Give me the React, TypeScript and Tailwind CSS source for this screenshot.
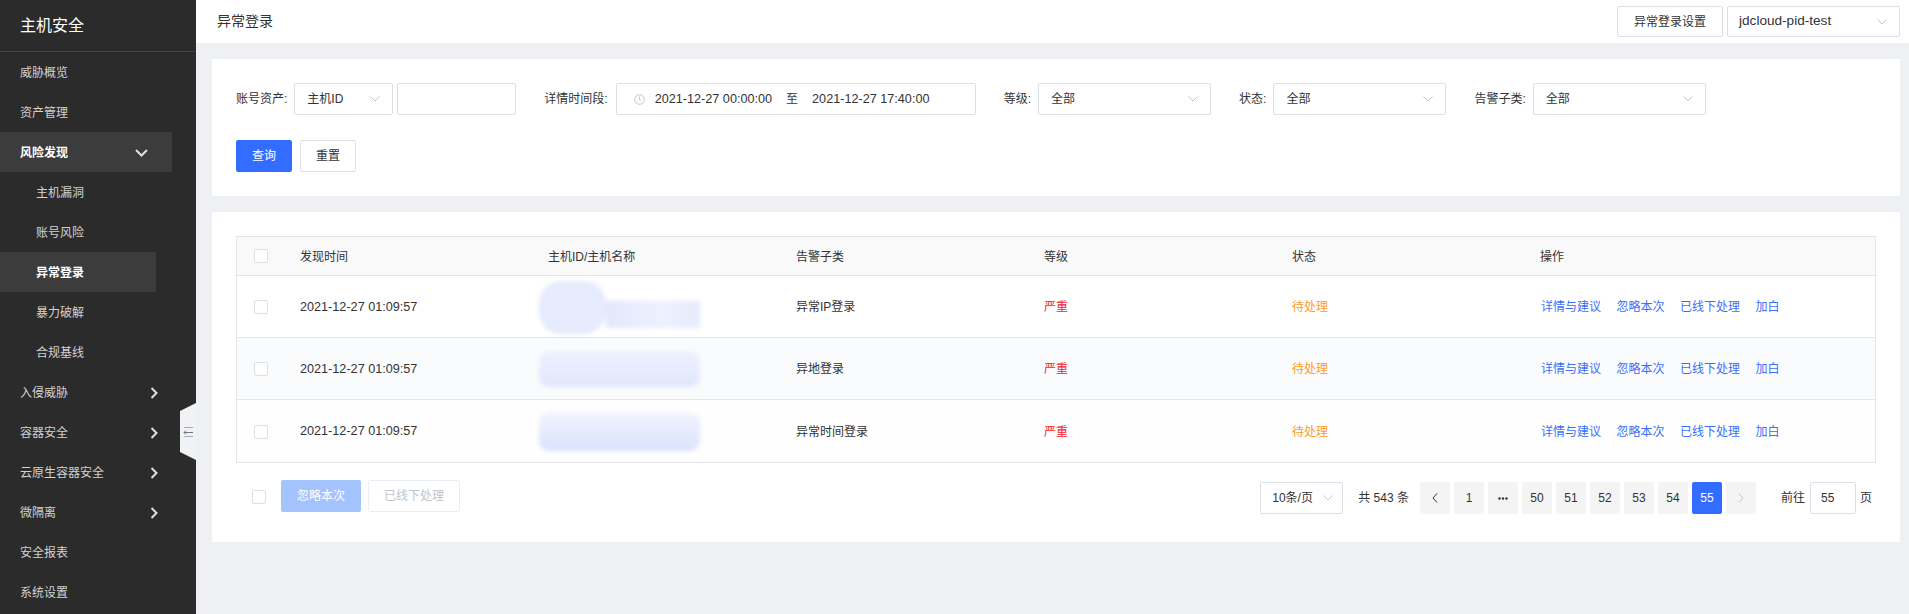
import React from "react";

const ChevronDown = ({ className = "" }: { className?: string }) => (
  <svg width="10" height="6" viewBox="0 0 10 6" className={className} fill="none">
    <path d="M0.5 0.5 L5 5 L9.5 0.5" stroke="currentColor" strokeWidth="1" />
  </svg>
);

const SideChevronRight = () => (
  <svg width="8" height="12" viewBox="0 0 8 12" fill="none">
    <path d="M1.5 1 L6.5 6 L1.5 11" stroke="#e0e0e0" strokeWidth="2" />
  </svg>
);

const SideChevronDown = () => (
  <svg width="13" height="8" viewBox="0 0 13 8" fill="none">
    <path d="M1 1 L6.5 6.5 L12 1" stroke="#e0e0e0" strokeWidth="2" />
  </svg>
);

const Checkbox = () => (
  <div className="w-[14px] h-[14px] border border-[#dcdfe6] rounded-[2px] bg-white shrink-0" />
);

const Select = ({ value, width }: { value: string; width: string }) => (
  <div
    className={`${width} h-[32px] border border-[#dcdfe6] rounded-[2px] bg-white flex items-center justify-between pl-[12px] pr-[12px] text-[12px] text-[#333]`}
  >
    <span>{value}</span>
    <ChevronDown className="text-[#c0c4cc]" />
  </div>
);

type MenuItem = { label: string; sub?: boolean; active?: boolean; open?: boolean; arrow?: boolean };

const menu: MenuItem[] = [
  { label: "威胁概览" },
  { label: "资产管理" },
  { label: "风险发现", open: true },
  { label: "主机漏洞", sub: true },
  { label: "账号风险", sub: true },
  { label: "异常登录", sub: true, active: true },
  { label: "暴力破解", sub: true },
  { label: "合规基线", sub: true },
  { label: "入侵威胁", arrow: true },
  { label: "容器安全", arrow: true },
  { label: "云原生容器安全", arrow: true },
  { label: "微隔离", arrow: true },
  { label: "安全报表" },
  { label: "系统设置" },
];

const rows = [
  { time: "2021-12-27 01:09:57", type: "异常IP登录", blob: 1 },
  { time: "2021-12-27 01:09:57", type: "异地登录", blob: 2 },
  { time: "2021-12-27 01:09:57", type: "异常时间登录", blob: 3 },
];

const Blob = ({ kind }: { kind: number }) => {
  if (kind === 1) {
    return (
      <div className="flex items-end blur-[2px]">
        <div className="w-[67px] h-[53px] rounded-[22px] bg-[#e6ebfd]" />
        <div className="w-[94px] h-[27px] mb-[6px] bg-[linear-gradient(90deg,#e2e7fc,#eef1fe_60%,#e6eafc)]" />
      </div>
    );
  }
  if (kind === 2) {
    return (
      <div className="w-[161px] h-[36px] rounded-[10px] blur-[2px] bg-[linear-gradient(180deg,#eef1fe,#e0e6fc)]" />
    );
  }
  return (
    <div className="w-[161px] h-[38px] rounded-[10px] blur-[2px] bg-[linear-gradient(180deg,#f1f3fe,#dbe2fb)]" />
  );
};

export default function App() {
  return (
    <div className="relative flex w-full h-[614px] overflow-hidden font-['Liberation_Sans','Noto_Sans_CJK_SC',sans-serif] text-[12px] text-[#333]">
      {/* Sidebar */}
      <aside className="w-[196px] shrink-0 bg-[#2b2b2b] flex flex-col">
        <div className="h-[52px] border-b border-[#444] flex items-center pl-[20px] text-[16px] text-white">
          主机安全
        </div>
        {menu.map((m) => (
          <div
            key={m.label}
            className={`h-[40px] flex items-center justify-between pt-[1px] pr-[24px] ${
              m.sub ? "pl-[36px]" : "pl-[20px]"
            } ${m.open ? "bg-[#3c3c3c] w-[172px] pr-[16px]" : ""} ${
              m.active ? "bg-[#3c3c3c] w-[156px]" : ""
            } ${m.open || m.active ? "text-white font-bold" : "text-[#d2d2d2]"}`}
          >
            <span>{m.label}</span>
            {m.open && <SideChevronDown />}
            {m.arrow && (
              <span className="mr-[14px]">
                <SideChevronRight />
              </span>
            )}
          </div>
        ))}
      </aside>

      {/* collapse tab */}
      <div className="absolute left-[180px] top-[403px] w-[16px] h-[57px]">
        <svg width="16" height="57" viewBox="0 0 16 57">
          <polygon points="0,8 16,0 16,57 0,49" fill="#f1f2f6" />
          <line x1="4" y1="24.5" x2="13" y2="24.5" stroke="#a8acb5" strokeWidth="1" />
          <line x1="4" y1="29.5" x2="13" y2="29.5" stroke="#6f7582" strokeWidth="1" />
          <path d="M6 27.5 L4 29.5 L6 31.5" stroke="#6f7582" strokeWidth="1" fill="none" />
          <line x1="4" y1="33.5" x2="13" y2="33.5" stroke="#a8acb5" strokeWidth="1" />
        </svg>
      </div>

      {/* Main */}
      <main className="flex-1 bg-[#eff0f4] flex flex-col min-w-0">
        <header className="h-[43px] bg-white flex items-center justify-between pl-[21px] pr-[9px] shrink-0">
          <span className="text-[14px] text-[#333]">异常登录</span>
          <div className="flex items-center gap-[4px]">
            <div className="h-[31px] px-[16px] border border-[#dcdfe6] rounded-[2px] flex items-center text-[12px] text-[#333]">
              异常登录设置
            </div>
            <div className="w-[173px] h-[31px] border border-[#dcdfe6] rounded-[2px] flex items-center justify-between pl-[11px] pr-[12px] text-[13.6px] text-[#333]">
              <span>jdcloud-pid-test</span>
              <ChevronDown className="text-[#c0c4cc]" />
            </div>
          </div>
        </header>

        <div className="pl-[16px] pr-[9px] pt-[16px] flex flex-col gap-[16px]">
          {/* Filter panel */}
          <section className="bg-white p-[24px] flex flex-col gap-[25px]">
            <div className="flex items-center">
              <div className="flex items-center">
                <span className="mr-[7px]">账号资产:</span>
                <Select value="主机ID" width="w-[99px]" />
                <div className="ml-[4px] w-[119px] h-[32px] border border-[#dcdfe6] rounded-[2px]" />
              </div>
              <div className="flex items-center ml-[28px]">
                <span className="mr-[8px]">详情时间段:</span>
                <div className="w-[360px] h-[32px] border border-[#dcdfe6] rounded-[2px] flex items-center pl-[17px] text-[#333]">
                  <svg width="11" height="11" viewBox="0 0 11 11" fill="none" className="mr-[10px]">
                    <circle cx="5.5" cy="5.5" r="4.8" stroke="#c0c4cc" strokeWidth="1" />
                    <path d="M5.5 2.6 V5.6 L7.4 6.8" stroke="#c0c4cc" strokeWidth="1" />
                  </svg>
                  <span className="text-[12.65px]">2021-12-27 00:00:00</span>
                  <span className="mx-[14px]">至</span>
                  <span className="text-[12.65px]">2021-12-27 17:40:00</span>
                </div>
              </div>
              <div className="flex items-center ml-[28px]">
                <span className="mr-[7px]">等级:</span>
                <Select value="全部" width="w-[173px]" />
              </div>
              <div className="flex items-center ml-[28px]">
                <span className="mr-[7px]">状态:</span>
                <Select value="全部" width="w-[173px]" />
              </div>
              <div className="flex items-center ml-[28px]">
                <span className="mr-[7px]">告警子类:</span>
                <Select value="全部" width="w-[173px]" />
              </div>
            </div>
            <div className="flex items-center gap-[8px]">
              <div className="w-[56px] h-[32px] bg-[#336dff] rounded-[2px] text-white flex items-center justify-center">
                查询
              </div>
              <div className="w-[56px] h-[32px] border border-[#dcdfe6] rounded-[2px] flex items-center justify-center text-[#333]">
                重置
              </div>
            </div>
          </section>

          {/* Table panel */}
          <section className="bg-white px-[24px] pt-[24px] pb-[28px]">
            <div className="border border-[#e6e6e6] divide-y divide-[#e6e6e6]">
              <div className="h-[39px] pt-[2px] bg-[#f9f9f9] grid grid-cols-[51px_248px_248px_248px_248px_248px_1fr] items-center text-[#333]">
                <div className="pl-[17px] -mt-[2px]">
                  <Checkbox />
                </div>
                <div className="pl-[12px]">发现时间</div>
                <div className="pl-[12px]">主机ID/主机名称</div>
                <div className="pl-[12px]">告警子类</div>
                <div className="pl-[12px]">等级</div>
                <div className="pl-[12px]">状态</div>
                <div className="pl-[12px]">操作</div>
              </div>
              {rows.map((r, i) => (
                <div
                  key={i}
                  className={`h-[62px] pt-[1px] grid grid-cols-[51px_248px_248px_248px_248px_248px_1fr] items-center ${
                    i === 1 ? "bg-[#fafbfd]" : i === 2 ? "bg-[#fefefe]" : "bg-white"
                  }`}
                >
                  <div className="pl-[17px]">
                    <Checkbox />
                  </div>
                  <div className="pl-[12px] text-[12.65px]">{r.time}</div>
                  <div className="pl-[3px]">
                    <Blob kind={r.blob} />
                  </div>
                  <div className="pl-[12px]">{r.type}</div>
                  <div className="pl-[12px] text-[#f5222d]">严重</div>
                  <div className="pl-[12px] text-[#ff9a1f]">待处理</div>
                  <div className="pl-[13px] flex items-center gap-[15.5px] text-[#3a6ff7]">
                    <span>详情与建议</span>
                    <span>忽略本次</span>
                    <span>已线下处理</span>
                    <span>加白</span>
                  </div>
                </div>
              ))}
            </div>

            <div className="mt-[17px] flex items-start">
              <div className="flex items-center">
                <div className="ml-[16px] mt-[1px]">
                  <Checkbox />
                </div>
                <div className="ml-[15px] w-[80px] h-[32px] bg-[#a3c3ff] rounded-[2px] text-white flex items-center justify-center">
                  忽略本次
                </div>
                <div className="ml-[7px] w-[92px] h-[32px] border border-[#ebeef5] rounded-[2px] text-[#c0c4cc] flex items-center justify-center">
                  已线下处理
                </div>
              </div>
              <div className="ml-auto mt-[2px] mr-[4px] flex items-center">
                <div className="w-[83px] h-[32px] border border-[#dcdfe6] rounded-[2px] flex items-center justify-between pl-[11px] pr-[9px]">
                  <span>10条/页</span>
                  <ChevronDown className="text-[#c0c4cc]" />
                </div>
                <span className="ml-[15px]">共 543 条</span>
                <div className="ml-[11px] flex items-center gap-[4px]">
                  <div className="w-[30px] h-[32px] bg-[#f4f4f5] rounded-[2px] flex items-center justify-center">
                    <svg width="6" height="10" viewBox="0 0 6 10" fill="none">
                      <path d="M5 0.5 L1 5 L5 9.5" stroke="#333" strokeWidth="1" />
                    </svg>
                  </div>
                  <div className="w-[30px] h-[32px] bg-[#f4f4f5] rounded-[2px] flex items-center justify-center">1</div>
                  <div className="w-[30px] h-[32px] bg-[#f4f4f5] rounded-[2px] flex items-center justify-center">
                    <svg width="10" height="3" viewBox="0 0 10 3">
                      <circle cx="1.5" cy="1.5" r="1.2" fill="#333" />
                      <circle cx="5" cy="1.5" r="1.2" fill="#333" />
                      <circle cx="8.5" cy="1.5" r="1.2" fill="#333" />
                    </svg>
                  </div>
                  {["50", "51", "52", "53", "54"].map((p) => (
                    <div key={p} className="w-[30px] h-[32px] bg-[#f4f4f5] rounded-[2px] flex items-center justify-center">
                      {p}
                    </div>
                  ))}
                  <div className="w-[30px] h-[32px] bg-[#336dff] rounded-[2px] text-white flex items-center justify-center">55</div>
                  <div className="w-[30px] h-[32px] bg-[#f4f4f5] rounded-[2px] flex items-center justify-center">
                    <svg width="6" height="10" viewBox="0 0 6 10" fill="none">
                      <path d="M1 0.5 L5 5 L1 9.5" stroke="#c0c4cc" strokeWidth="1" />
                    </svg>
                  </div>
                </div>
                <span className="ml-[25px]">前往</span>
                <div className="ml-[5px] w-[46px] h-[32px] border border-[#dcdfe6] rounded-[2px] flex items-center pl-[10px]">55</div>
                <span className="ml-[4px]">页</span>
              </div>
            </div>
          </section>
        </div>
      </main>
    </div>
  );
}
